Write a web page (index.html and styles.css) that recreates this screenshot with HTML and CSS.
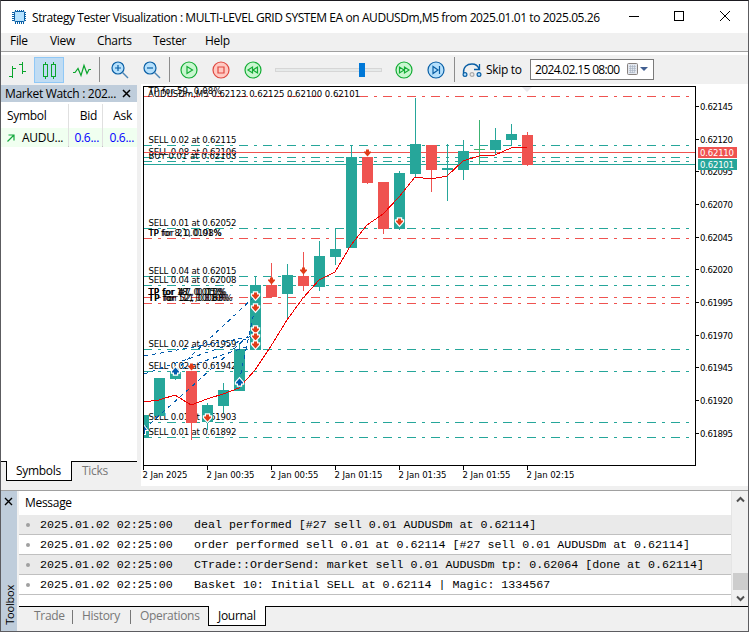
FILE: index.html
```html
<!DOCTYPE html>
<html lang="en">
<head>
    <meta charset="UTF-8">
    <meta name="viewport" content="width=device-width, initial-scale=1.0">
    <title>Strategy Tester Visualization</title>
    <link rel="stylesheet" href="styles.css">
</head>
<body>
<div class="window">
    <header class="titlebar">
        <svg class="app-icon" width="16" height="16" viewBox="0 0 16 16">
            <path d="M4.5 1v14M6.5 1v14M8.5 1v14M10.5 1v14M12.5 1v14M1 3.5h14M1 5.5h14M1 7.5h14M1 9.5h14M1 11.5h14" stroke="#0a5fa5"/>
            <rect x="3.5" y="2.5" width="10" height="10" rx="1" fill="#b5e2ff" stroke="#0a5fa5"/>
        </svg>
        <h1 class="title">Strategy Tester Visualization : MULTI-LEVEL GRID SYSTEM EA on AUDUSDm,M5 from 2025.01.01 to 2025.05.26</h1>
        <svg class="controls" width="120" height="32" viewBox="0 0 120 32">
            <path d="M1 15.5h10M46.5 10.5h9v9h-9z" fill="none" stroke="#000" shape-rendering="crispEdges"/>
            <path d="M92 10l10 10M102 10l-10 10" stroke="#000"/>
        </svg>
    </header>

    <nav class="menu">
        <span class="m-file">File</span>
        <span class="m-view">View</span>
        <span class="m-charts">Charts</span>
        <span class="m-tester">Tester</span>
        <span>Help</span>
    </nav>

    <div class="toolbar">
        <button class="tool"><svg width="30" height="26" viewBox="0 0 30 26"><path d="M10.5 9v12M7 19.5h3.5M10.5 11.5h3.500M20.5 5v12M17 7.5h3.5M20.5 14.5h3.5"/></svg></button>
        <button class="tool active"><svg width="30" height="26" viewBox="0 0 30 26"><path d="M9.5 7.5h4v12h-4zM17.5 7.5h4v12h-4zM11.500 5v2M11.500 20v2M19.500 5v2M19.500 20v2" shape-rendering="crispEdges"/></svg></button>
        <button class="tool"><svg width="30" height="26" viewBox="0 0 30 26"><path d="M7 15.500h2l3-4 3 7 3-10 3 8 2-4h2" stroke-width="1.200"/></svg></button>
        <i class="sep s1"></i>
        <svg class="zoom-in" width="18" height="18" viewBox="0 0 18 18"><circle cx="7" cy="7" r="6" fill="#b5e0fc" stroke="#0a5fa5" stroke-width="1.2"/><path d="M11.500 11.500l5.500 5.500" stroke="#4c86b5" stroke-width="1.400"/><path d="M4 7h6M7 4v6" stroke="#0a5fa5" stroke-width="1.2"/></svg>
        <svg class="zoom-out" width="18" height="18" viewBox="0 0 18 18"><circle cx="7" cy="7" r="6" fill="#b5e0fc" stroke="#0a5fa5" stroke-width="1.2"/><path d="M11.500 11.500l5.500 5.500" stroke="#4c86b5" stroke-width="1.400"/><path d="M4 7h6" stroke="#0a5fa5" stroke-width="1.2"/></svg>
        <i class="sep s2"></i>
        <svg class="round play" viewBox="0 0 18 18"><circle cx="9" cy="9" r="8"/><path d="M7 5.500v7L12.500 9z"/></svg>
        <svg class="round stop" viewBox="0 0 18 18"><circle cx="9" cy="9" r="8"/><path d="M6 6h6v6H6z"/></svg>
        <svg class="round slower" viewBox="0 0 18 18"><circle cx="9" cy="9" r="8"/><path d="M8.500 6v6L4 9zM13.500 6v6L9 9z"/></svg>
        <div class="slider"><div class="thumb"></div></div>
        <svg class="round faster" viewBox="0 0 18 18"><circle cx="9" cy="9" r="8"/><path d="M4.500 6v6L9 9zM9.500 6v6L14 9z"/></svg>
        <svg class="round step" viewBox="0 0 18 18"><circle cx="9" cy="9" r="8"/><path d="M6 5.500v7L11 9zM12.500 5v8"/></svg>
        <i class="sep s3"></i>
        <svg class="skip-icon" width="20" height="18" viewBox="0 0 20 18">
            <path d="M1.500 12C1 6 5 3 10 3c4 0 6 2 7 5M17.500 3v5.500H12" fill="none" stroke="#0a5fa5" stroke-width="1.300"/>
            <circle cx="3" cy="13.500" r="1.900" fill="#b5e0fc" stroke="#0a5fa5" stroke-width="1.200"/>
            <circle cx="10" cy="13.500" r="1.900" fill="#eee" stroke="#aaa" stroke-width="1.200"/>
            <circle cx="17" cy="13.500" r="1.900" fill="#b5e0fc" stroke="#0a5fa5" stroke-width="1.200"/>
        </svg>
        <span class="skip-label">Skip to</span>
        <div class="date">
            <span>2024.02.15 08:00</span>
            <svg width="22" height="13" viewBox="0 0 22 13">
                <rect x=".5" y=".5" width="10" height="11" rx="1" fill="#e4e8ef" stroke="#87817e"/>
                <path d="M2 3.500h7M2 5.500h7M2 7.500h7M2 9.500h5M3.500 2v8M5.500 2v8M7.500 2v8" stroke="#a5b0c0" stroke-width=".6"/>
                <path d="M13 4h8l-4 4z" fill="#415f91"/>
            </svg>
        </div>
    </div>

    <main class="main">
        <aside class="watch">
            <div class="watch-title">
                <span>Market Watch : 202...</span>
                <svg width="9" height="9" viewBox="0 0 9 9"><path d="M1 1l7 7M8 1L1 8" stroke="#000" stroke-width="1.500"/></svg>
            </div>
            <div class="quotes head"><span>Symbol</span><span>Bid</span><span>Ask</span></div>
            <div class="quotes row">
                <span class="symbol"><svg width="8" height="8" viewBox="0 0 8 8"><path d="M.5 7.500l6-6M1.500 1h5.500v5.500" fill="none" stroke="#12a83c" stroke-width="1.200"/></svg>AUDU...</span>
                <span>0.6...</span><span>0.6...</span>
            </div>
            <div class="watch-tabs">
                <span class="tab current">Symbols</span>
                <span class="tab">Ticks</span>
            </div>
        </aside>

        <svg class="chart" id="chart" width="607" height="402" viewBox="141 84 607 402">
            <path d="M522 87h10l-5 5z" fill="#e8e8ec"/>
            <g id="levels"></g>
            <g id="labels"></g>
            <g id="candles"></g>
            <g class="trades">
                <path d="M144 356L255 336M144 374L255 336M144 429L255 330M175 371L255 296M175 371L255 344M239 382L255 308"/>
            </g>
            <path class="average" d="M144 402L159 400L175 395L191 405L207 399L223 394L239 388L255 370L271 346L287 320L303 298L319 280L335 272L351 245L367 225L383 214L399 197L415 177L431 179L447 176L463 161L479 156L495 155L511 148L527 147"/>
            <g id="arrows"></g>
            <path class="frame" d="M143.500 469.500V86.500H695.500V465.500H143.500"/>
            <g id="axes"></g>
        </svg>
    </main>

    <section class="toolbox">
        <div class="toolbox-side">
            <svg width="9" height="9" viewBox="0 0 9 9"><path d="M1 1l7 7M8 1L1 8" stroke="#000" stroke-width="1.400"/></svg>
            <span>Toolbox</span>
        </div>
        <div class="journal">
            <div class="journal-body">
                <div class="log">
                    <div class="log-head">Message</div>
                    <div class="log-row"><i></i><span class="time">2025.01.02 02:25:00</span><span>deal performed [#27 sell 0.01 AUDUSDm at 0.62114]</span></div>
                    <div class="log-row"><i></i><span class="time">2025.01.02 02:25:00</span><span>order performed sell 0.01 at 0.62114 [#27 sell 0.01 AUDUSDm at 0.62114]</span></div>
                    <div class="log-row"><i></i><span class="time">2025.01.02 02:25:00</span><span>CTrade::OrderSend: market sell 0.01 AUDUSDm tp: 0.62064 [done at 0.62114]</span></div>
                    <div class="log-row"><i></i><span class="time">2025.01.02 02:25:00</span><span>Basket 10: Initial SELL at 0.62114 | Magic: 1334567</span></div>
                </div>
                <div class="scrollbar">
                    <svg width="9" height="7" viewBox="0 0 9 7"><path d="M1 5.500L4.500 2 8 5.500" fill="none" stroke="#505050" stroke-width="2"/></svg>
                    <div class="scroll-thumb"></div>
                    <svg width="9" height="7" viewBox="0 0 9 7"><path d="M1 1.500L4.500 5 8 1.500" fill="none" stroke="#505050" stroke-width="2"/></svg>
                </div>
            </div>
            <div class="bottom-tabs">
                <span class="t-trade">Trade</span>
                <span class="t-history">History</span>
                <span class="t-operations">Operations</span>
                <span class="t-journal">Journal</span>
            </div>
        </div>
    </section>
</div>
<script src="chart.js"></script>
</body>
</html>
```
FILE: styles.css
```css
body {
    margin: 0;
    background: #1b1a20;
    font-family: "Open Sans", "Noto Sans", sans-serif;
    font-size: 12px;
    letter-spacing: -0.3px;
    color: #000;
}

.window {
    box-sizing: border-box;
    width: 749px;
    height: 632px;
    border: 1px solid #5c5c60;
    border-top-color: #1b1a20;
    background: #f0f0f0;
    display: flex;
    flex-direction: column;
    overflow: hidden;
    white-space: nowrap;
}

.titlebar {
    height: 32px;
    background: #fff;
    display: flex;
    align-items: center;
}

.app-icon {
    margin-left: 10px;
    flex: none;
}

.title {
    margin: 0 0 0 5px;
    width: 596px;
    font-size: 12px;
    font-weight: normal;
    letter-spacing: -0.42px;
}

.controls {
    flex: none;
}

.menu {
    box-sizing: border-box;
    height: 19px;
    line-height: 16px;
    padding-left: 9px;
    border-bottom: 1px solid #a0a0a0;
    display: flex;
}

.m-file { width: 40px; }
.m-view { width: 47px; }
.m-charts { width: 56px; }
.m-tester { width: 52px; }

.toolbar {
    box-sizing: border-box;
    height: 32px;
    border-top: 3px solid #fff;
    display: flex;
    align-items: center;
}

.tool {
    box-sizing: border-box;
    width: 30px;
    height: 26px;
    padding: 0;
    border: 0;
    background: none;
    margin-left: 1px;
}

.tool + .tool {
    margin-left: 2px;
}

.tool svg {
    display: block;
    fill: none;
    stroke: #0aa52c;
}

.tool.active {
    background: #c0dcf3;
    box-shadow: inset 0 0 0 1px #90c8f6;
}

.sep {
    width: 1px;
    height: 25px;
    background: #8c8c8c;
}

.s1 { margin-left: 3px; }
.s2 { margin-left: 8px; }
.s3 { margin-left: 9px; }
.zoom-in { margin-left: 11px; }
.zoom-out { margin-left: 14px; }

.round {
    width: 18px;
    height: 18px;
    flex: none;
    fill: #c9f7d0;
    stroke: #14ac35;
    stroke-width: 1.2px;
}

.play { margin-left: 10px; }
.stop { margin-left: 14px; fill: #ffc9c2; stroke: #df4840; }
.slower { margin-left: 14px; }
.faster { margin-left: 13px; }
.step { margin-left: 14px; fill: #b5e0fc; stroke: #0a5fa5; }

.slider {
    box-sizing: border-box;
    width: 107px;
    height: 4px;
    margin-left: 13px;
    border: 1px solid #d6d6d6;
    background: #e7eaea;
}

.thumb {
    width: 6px;
    height: 14px;
    margin: -6px 0 0 83px;
    background: #0078d7;
}

.skip-icon { margin-left: 7px; }

.skip-label {
    margin-left: 4px;
    width: 44px;
}

.date {
    box-sizing: border-box;
    width: 124px;
    height: 21px;
    padding-left: 4px;
    border: 1px solid #7a7a7a;
    background: #fff;
    display: flex;
    align-items: center;
}

.date span {
    width: 92px;
    letter-spacing: -0.65px;
}

.main {
    height: 402px;
    display: flex;
}

.watch {
    width: 136px;
    margin: 1px 4px 0 0;
    height: 396px;
    display: flex;
    flex-direction: column;
    background: #fff;
}

.watch-title {
    height: 17px;
    line-height: 17px;
    padding: 0 6px 0 4px;
    background: #bfcddb;
    border-bottom: 2px solid #fff;
    display: flex;
    align-items: center;
    justify-content: space-between;
}

.quotes {
    display: grid;
    grid-template-columns: 67px 33px 34px;
    column-gap: 1px;
    height: 24px;
    line-height: 23px;
    background: #e0e0e0;
}

.quotes span {
    background: #fff;
    text-align: right;
    padding-right: 5px;
}

.quotes span:first-child {
    text-align: left;
    padding: 0 0 0 6px;
}

.quotes.row {
    height: 18px;
    line-height: 19px;
    border-bottom: 1px solid #c0c0c0;
}

.quotes.row span {
    background: #f0fff0;
    color: #0000ff;
}

.quotes.row span + span {
    padding-right: 3px;
}

.quotes.row .symbol {
    color: #000;
    display: flex;
    align-items: center;
    gap: 7px;
}

.watch-tabs {
    display: flex;
    height: 20px;
    line-height: 19px;
    margin-top: auto;
    background: linear-gradient(#000 0 1px, #f0f0f0 1px);
}

.tab {
    color: #777;
    padding-left: 10px;
}

.tab.current {
    box-sizing: border-box;
    width: 66px;
    margin-left: 5px;
    padding-left: 9px;
    background: #fff;
    border: 1px solid #000;
    border-top: 0;
    color: #000;
}

.chart {
    display: block;
    background: #fff;
    font-family: "DejaVu Sans Condensed", "DejaVu Sans", sans-serif;
    font-size: 9.5px;
    letter-spacing: 0;
}

.chart line,
.chart rect,
.average,
.trades,
.frame {
    shape-rendering: crispEdges;
}

.up { fill: #26a69a; stroke: none; }
.down { fill: #ef5350; stroke: none; }
.flat { fill: #3cb371; stroke: none; }
.buy { stroke: #26a69a; }
.sell { stroke: #ef5350; }
.dash { stroke-dasharray: 9 6 3 6; }
.average { fill: none; stroke: #f00000; }
.trades { fill: none; stroke: #005aac; stroke-dasharray: 4 4; }
.frame { fill: none; stroke: #000; }
.tick { stroke: #000; }
.tag { fill: #fff; }

.toolbox {
    height: 140px;
    margin-top: 4px;
    border-top: 1px solid #a0a0a0;
    display: flex;
}

.toolbox-side {
    box-sizing: border-box;
    width: 16px;
    height: 140px;
    padding: 6px 0 6px 3px;
    background: #bfcddb;
    display: flex;
    flex-direction: column;
    justify-content: space-between;
}

.toolbox-side span {
    writing-mode: vertical-rl;
    transform: rotate(180deg);
    font-size: 11px;
    line-height: 11px;
    letter-spacing: -0.2px;
}

.journal {
    width: 729px;
    margin-left: 2px;
}

.journal-body {
    display: flex;
    height: 115px;
    background: #fff;
}

.log {
    width: 712px;
    border-right: 1px solid #e5e5e5;
}

.log-head {
    height: 24px;
    line-height: 24px;
    padding-left: 6px;
}

.log-row {
    box-sizing: border-box;
    height: 20px;
    line-height: 20px;
    border-bottom: 1px solid #c0c0c0;
    display: flex;
    align-items: center;
    font-family: "Liberation Mono", monospace;
    font-size: 11.65px;
    letter-spacing: 0;
}

.log-row:nth-child(even) {
    background: #eaeaea;
}

.log-row i {
    width: 4px;
    height: 4px;
    margin: 0 10px 0 7px;
    border-radius: 50%;
    background: #a0a0a0;
}

.time {
    width: 154px;
}

.scrollbar {
    width: 16px;
    background: #f0f0f0;
    display: flex;
    flex-direction: column;
    align-items: center;
    justify-content: space-between;
    padding: 5px 0 4px;
    box-sizing: border-box;
}

.scroll-thumb {
    width: 15px;
    height: 17px;
    margin: auto 0 5px;
    background: #cdcdcd;
}

.bottom-tabs {
    height: 25px;
    line-height: 20px;
    background: linear-gradient(#000 0 1px, #f0f0f0 1px);
    display: flex;
    color: #777;
}

.bottom-tabs span {
    box-sizing: border-box;
    height: 20px;
}

.t-trade { width: 54px; padding-left: 15px; }
.t-history { width: 58px; padding-left: 9px; }
.t-operations { width: 77px; padding-left: 9px; }

.t-trade,
.t-history {
    background: linear-gradient(#777, #777) right 4px / 1px 14px no-repeat;
}

.bottom-tabs .t-journal {
    width: 58px;
    padding-left: 9px;
    border: 1px solid #000;
    border-top: 0;
    background: #fff;
    color: #000;
}
```
FILE: chart.js
```js
const NS = 'http://www.w3.org/2000/svg';

function add(parent, tag, attrs, text) {
    const el = document.createElementNS(NS, tag);
    Object.entries(attrs).forEach(([key, value]) => el.setAttribute(key, value));
    if (text) el.textContent = text;
    document.getElementById(parent).appendChild(el);
}

// y, class
const levels = [
    [96, 'sell dash'], [145, 'buy dash'], [157, 'buy dash'], [161, 'buy dash'],
    [228, 'buy dash'], [238, 'sell dash'], [276, 'buy dash'], [285, 'buy dash'],
    [297, 'sell dash'], [303, 'sell dash'], [349, 'buy dash'], [371, 'buy dash'],
    [422, 'buy dash'], [437, 'buy dash'], [164, 'buy']
];

levels.forEach(([y, cls]) => {
    add('levels', 'line', { x1: 143, x2: 695, y1: y + 0.5, y2: y + 0.5, class: cls });
});

// text, baseline, width
const labels = [
    ['TP for 59, 0.08%', 94, 73], ['SELL 0.02 at 0.62115', 143, 88],
    ['SELL 0.08 at 0.62106', 155, 88], ['BUY 0.01 at 0.62103', 159, 88],
    ['SELL 0.01 at 0.62052', 226, 88], ['TP for 21, 0.01%', 236, 73], ['TP for 8, 0.0198%', 236, 73],
    ['SELL 0.04 at 0.62015', 274, 88], ['SELL 0.04 at 0.62008', 283, 88],
    ['TP for 47, 0.05%', 295, 75], ['TP for 18, 0.010%', 295, 78], ['TP for #7, 0.15%', 295, 77],
    ['TP for 52, 0.06%', 301, 78], ['TP for 12, 0.010%', 301, 81], ['TP for 11, 0.88%', 301, 84],
    ['SELL 0.02 at 0.61959', 347, 88], ['SELL 0.02 at 0.61942', 369, 88],
    ['SELL 0.01 at 0.61903', 420, 88], ['SELL 0.01 at 0.61892', 435, 88]
];

labels.forEach(([text, y, width]) => {
    add('labels', 'text', { x: 148.5, y: y, textLength: width }, text);
});
add('labels', 'text', { x: 148, y: 97, textLength: 212 }, 'AUDUSDm,M5  0.62123 0.62125 0.62100 0.62101');
add('labels', 'line', { x1: 143, x2: 695, y1: 152.5, y2: 152.5, class: 'sell' });

// center, high, top, bottom, low, class
const candles = [
    [159, 378, 378, 416, 416, 'up'], [175, 372, 372, 379, 380, 'up'],
    [191, 371, 371, 423, 440, 'down'], [207, 403, 405, 422, 430, 'up'],
    [223, 383, 390, 406, 413, 'up'], [239, 344, 349, 391, 391, 'up'],
    [255, 276, 285, 350, 350, 'up'], [271, 263, 285, 297, 297, 'down'],
    [287, 264, 275, 294, 320, 'up'], [303, 252, 276, 286, 291, 'down'],
    [319, 241, 256, 287, 291, 'up'], [335, 228, 249, 257, 265, 'up'],
    [351, 145, 157, 248, 248, 'up'], [367, 157, 157, 183, 184, 'down'],
    [383, 182, 182, 229, 234, 'down'], [399, 171, 173, 229, 230, 'up'],
    [415, 98, 144, 174, 178, 'up'], [431, 145, 145, 170, 192, 'down'],
    [447, 144, 168, 170, 201, 'up'], [463, 140, 151, 170, 180, 'up'],
    [479, 120, 149, 150, 165, 'flat'], [495, 128, 140, 150, 155, 'up'],
    [511, 124, 134, 140, 145, 'up'], [527, 132, 135, 165, 166, 'down']
];

add('candles', 'rect', { x: 144, y: 415, width: 5, height: 23, class: 'up' });
candles.forEach(([x, high, top, bottom, low, cls]) => {
    add('candles', 'rect', { x: x, y: high, width: 1, height: low - high, class: cls });
    add('candles', 'rect', { x: x - 5, y: top, width: 11, height: bottom - top, class: cls });
});

const down = 'M-1.5 -3.5h3v2h2v1L0 3.500L-3.500 -.5v-1h2z';
const up = 'M-1.5 3.500h3v-2h2v-1L0 -3.500L-3.500 .5v1h2z';

// x, y, direction, outlined
const arrows = [
    [367, 153, 'down', false], [271, 281, 'down', false], [303, 271, 'down', false], [191, 367, 'down', false],
    [399, 222, 'down', true], [255, 296, 'down', true], [255, 308, 'down', true],
    [255, 330, 'down', true], [255, 337, 'down', true], [255, 345, 'down', true],
    [207, 418, 'down', true], [175, 371, 'up', true], [239, 382, 'up', true]
];

arrows.forEach(([x, y, dir, outlined]) => {
    add('arrows', 'path', {
        d: dir === 'down' ? down : up,
        transform: `translate(${x + 0.5} ${y})`,
        fill: dir === 'down' ? '#e03c18' : '#005aac',
        stroke: outlined ? '#fff' : 'none',
        'stroke-width': 2.4,
        'paint-order': 'stroke'
    });
});
add('arrows', 'path', { d: 'M144 426l3 4h-2v4h-1z', fill: '#005aac', stroke: '#fff', 'stroke-width': 2, 'paint-order': 'stroke' });

const prices = [
    ['0.62145', 106], ['0.62120', 139], ['0.62095', 171], ['0.62070', 204],
    ['0.62045', 237], ['0.62020', 269], ['0.61995', 302], ['0.61970', 335],
    ['0.61945', 367], ['0.61920', 400], ['0.61895', 433]
];

prices.forEach(([text, y]) => {
    add('axes', 'line', { x1: 696, x2: 699, y1: y + 0.5, y2: y + 0.5, class: 'tick' });
    add('axes', 'text', { x: 700, y: y + 4, textLength: 33 }, text);
});

const times = ['2 Jan 2025', '2 Jan 00:35', '2 Jan 00:55', '2 Jan 01:15', '2 Jan 01:35', '2 Jan 01:55', '2 Jan 02:15'];

times.forEach((text, i) => {
    const x = 143 + i * 64;
    add('axes', 'line', { x1: x + 0.5, x2: x + 0.5, y1: 466, y2: 470, class: 'tick' });
    add('axes', 'text', { x: x - 0.5, y: 478, textLength: i ? 48 : 45 }, text);
});

add('axes', 'rect', { x: 698, y: 147, width: 39, height: 11, class: 'down' });
add('axes', 'text', { x: 700, y: 156, textLength: 34, class: 'tag' }, '0.62110');
add('axes', 'rect', { x: 698, y: 159, width: 39, height: 11, class: 'up' });
add('axes', 'text', { x: 700, y: 168, textLength: 34, class: 'tag' }, '0.62101');
```
